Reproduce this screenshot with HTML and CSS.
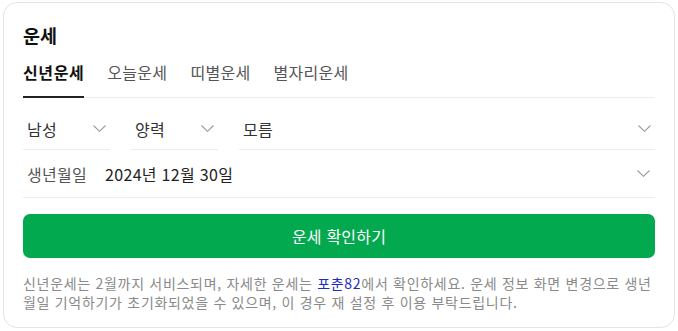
FILE: index.html
```html
<!DOCTYPE html>
<html lang="ko">
<head>
<meta charset="utf-8">
<link rel="stylesheet" href="styles.css">
</head>
<body>
<div class="card">
  <h2 class="title">운세</h2>
  <div class="tabs">
    <span class="tab active">신년운세</span>
    <span class="tab">오늘운세</span>
    <span class="tab">띠별운세</span>
    <span class="tab">별자리운세</span>
  </div>
  <div class="row row-selects">
    <div class="select sel-small"><span class="val">남성</span><svg class="chev" width="13" height="7" viewBox="0 0 13 7"><polyline points="0.5,0.5 6.5,6.3 12.5,0.5" fill="none" stroke="#9a9a9a" stroke-width="1.1"/></svg></div>
    <div class="select sel-small"><span class="val">양력</span><svg class="chev" width="13" height="7" viewBox="0 0 13 7"><polyline points="0.5,0.5 6.5,6.3 12.5,0.5" fill="none" stroke="#9a9a9a" stroke-width="1.1"/></svg></div>
    <div class="select sel-grow"><span class="val">모름</span><svg class="chev" width="13" height="7" viewBox="0 0 13 7"><polyline points="0.5,0.5 6.5,6.3 12.5,0.5" fill="none" stroke="#9a9a9a" stroke-width="1.1"/></svg></div>
  </div>
  <div class="row row-date">
    <div class="select sel-grow">
      <span class="val"><span class="label">생년월일</span><span class="date">2024년 12월 30일</span></span>
      <svg class="chev" width="13" height="7" viewBox="0 0 13 7"><polyline points="0.5,0.5 6.5,6.3 12.5,0.5" fill="none" stroke="#9a9a9a" stroke-width="1.1"/></svg>
    </div>
  </div>
  <button class="btn">운세 확인하기</button>
  <p class="note">신년운세는 2월까지 서비스되며, 자세한 운세는 <a class="link">포춘82</a>에서 확인하세요. 운세 정보 화면 변경으로 생년월일 기억하기가 초기화되었을 수 있으며, 이 경우 재 설정 후 이용 부탁드립니다.</p>
</div>
</body>
</html>
```
FILE: styles.css
```css
* { box-sizing: border-box; }
html, body { margin: 0; padding: 0; background: #fff; }
body {
  font-family: "Noto Sans CJK KR", "Noto Sans", sans-serif;
  color: #222;
}
.card {
  margin: 2px 3px;
  border: 1px solid #e4e4e4;
  border-radius: 14px;
  padding: 20px 19px 15px;
  background: #fff;
}
.title {
  margin: 0;
  font-size: 18.5px;
  line-height: 24px;
  font-weight: 700;
  color: #111;
}
.tabs {
  display: flex;
  gap: 23px;
  margin-top: 14px;
  border-bottom: 1px solid #ececec;
}
.tab {
  font-size: 16px;
  letter-spacing: 0.3px;
  line-height: 22px;
  color: #555;
  padding-bottom: 13px;
  border-bottom: 2px solid transparent;
  margin-bottom: -1px;
}
.tab.active {
  color: #111;
  font-weight: 700;
  letter-spacing: 0.6px;
  border-bottom-color: #222;
}
.row { display: flex; gap: 21px; }
.row-selects { margin-top: 10px; }
.select {
  display: flex;
  align-items: center;
  justify-content: space-between;
  border-bottom: 1px solid #ececec;
  padding: 0 4px 0 4px;
  font-size: 16px;
  letter-spacing: 0.3px;
  color: #333;
}
.row-selects .select { height: 42px; }
.row-date .select { height: 48px; padding-right: 5px; }
.sel-small { width: 87px; }
.sel-grow { flex: 1; }
.chev { display: block; flex: none; }
.label { color: #555; margin-right: 18px; }
.date { color: #222; }
.btn {
  display: block;
  width: 100%;
  height: 44px;
  margin-top: 16px;
  border: none;
  border-radius: 7px;
  background: #03a94e;
  color: #fff;
  font-family: inherit;
  font-size: 16px;
  letter-spacing: 0.2px;
}
.note {
  margin: 16px 0 0;
  font-size: 14px;
  letter-spacing: 0.7px;
  line-height: 19px;
  color: #8a8a8a;
}
.link { color: #1b2bc4; text-decoration: none; }
```
